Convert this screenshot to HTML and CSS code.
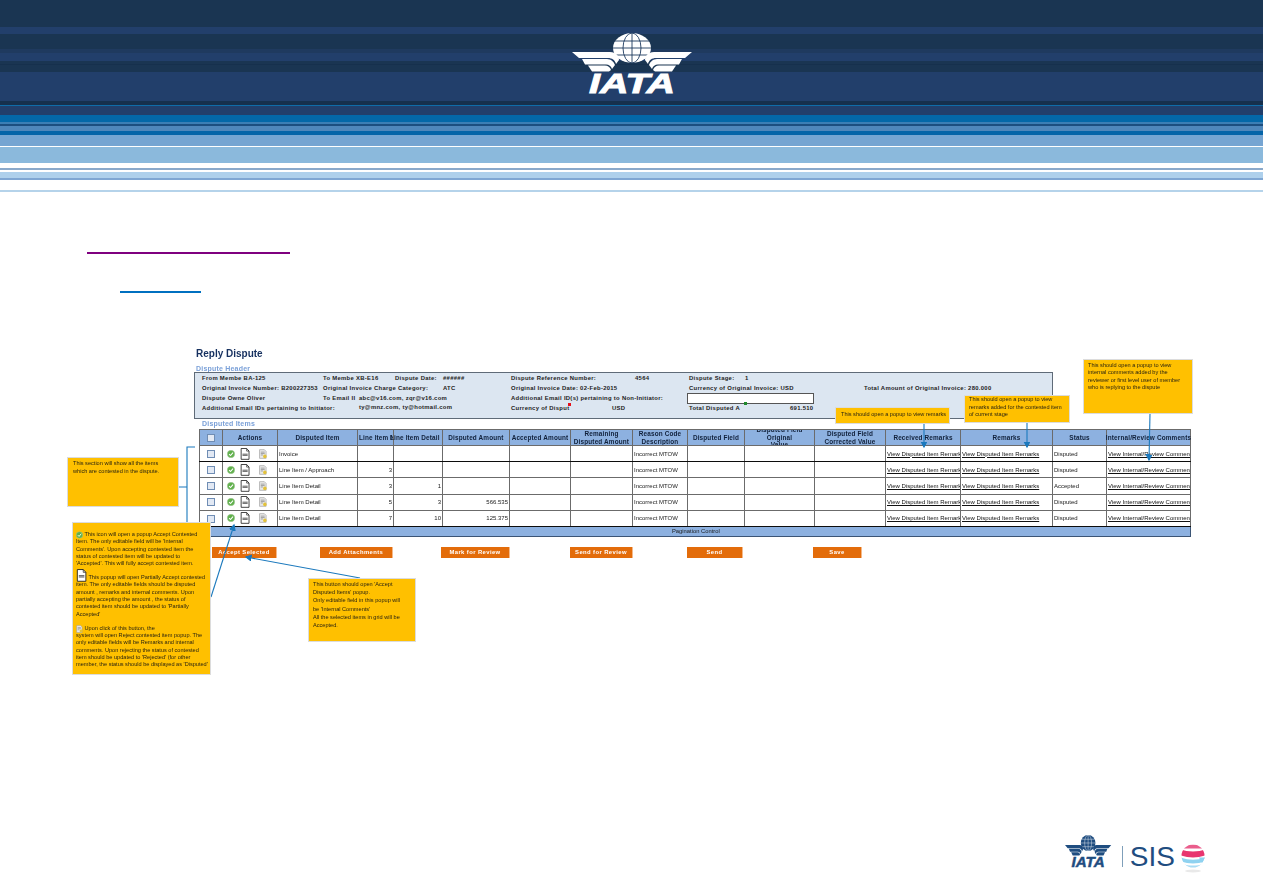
FILE: index.html
```html
<!DOCTYPE html>

<html>
  <head>
    <meta charset="UTF-8" />
    <title>Reply Dispute</title>
    <link rel="stylesheet" href="styles.css">
  </head>

  <body>
    <svg class="icon-defs" width="0" height="0">
      <defs>
        <g id="iata-mark">
          <ellipse class="mark__globe" cx="60" cy="15" rx="19" ry="15" />
          <g class="mark__grid">
            <ellipse cx="60" cy="15" rx="9" ry="15" />
            <path d="M60 0V30M43 8H77M41 15H79M43 22H77" />
          </g>
          <path d="M0 19H38C44 19 47 23 47 27L44 31C43 27 40 25 36 25H7Z" />
          <path d="M10 26H35C39 26 42 29 43 32L40 36C39 33 37 31.5 34 31.5H13Z" />
          <path d="M16 32.5H33C36 32.5 38 34 39 37L37 38.5H20Z" />
          <g transform="matrix(-1 0 0 1 120 0)">
            <path d="M0 19H38C44 19 47 23 47 27L44 31C43 27 40 25 36 25H7Z" />
            <path d="M10 26H35C39 26 42 29 43 32L40 36C39 33 37 31.5 34 31.5H13Z" />
            <path d="M16 32.5H33C36 32.5 38 34 39 37L37 38.5H20Z" />
          </g>
          <text class="mark__text" x="60" y="60" text-anchor="middle" textLength="86" lengthAdjust="spacingAndGlyphs">IATA</text>
        </g>
        <symbol id="icon-accept" viewBox="0 0 10 10">
          <circle cx="5" cy="5" r="4.6" fill="#5fb04a" stroke="#a9c9a0" stroke-width=".6" />
          <path d="M2.6 5.2L4.4 7L7.5 3.2" fill="none" stroke="#fff" stroke-width="1.3" />
        </symbol>
        <symbol id="icon-partial" viewBox="0 0 11 14">
          <path d="M1 .6H7.4L10.2 3.6V13.2H1Z" fill="#fff" stroke="#111" stroke-width=".9" />
          <path d="M7.4 .6V3.6H10.2" fill="none" stroke="#111" stroke-width=".7" />
          <path d="M2.6 7.2H8.6M2.6 8.6H8.6" stroke="#333" stroke-width=".9" />
        </symbol>
        <symbol id="icon-reject" viewBox="0 0 9 11">
          <path d="M.6 .6H6L8 2.6V10.4H.6Z" fill="#e8e8e8" stroke="#9a9a9a" stroke-width=".7" />
          <path d="M2 3.4H6.4M2 5H6.4M2 6.6H4.4" stroke="#777" stroke-width=".7" />
          <circle cx="6.6" cy="8.2" r="2" fill="#e3c23a" />
        </symbol>
      </defs>
    </svg>

    <div class="page">
      <header class="banner">
        <svg class="banner__logo" viewBox="0 0 122 62">
          <use href="#iata-mark" />
        </svg>
      </header>

      <div class="rule rule--section"></div>
      <div class="rule rule--subsection"></div>

      <main class="sheet">
        <h1 class="sheet__title">Reply Dispute</h1>
        <h2 class="sheet__label">Dispute Header</h2>

        <section class="summary">
          <b class="c1">From Membe BA-125</b>
          <b class="c2">To Membe XB-E16</b>
          <b class="c4">Dispute Date:</b>
          <b class="c5">######</b>
          <b class="c6">Dispute Reference Number:</b>
          <b class="c8">4564</b>
          <b class="c9">Dispute Stage:</b>
          <b class="c10">1</b>

          <b class="c1">Original Invoice Number: B200227353</b>
          <b class="c2">Original Invoice Charge Category:</b>
          <b class="c5">ATC</b>
          <b class="c6">Original Invoice Date: 02-Feb-2015</b>
          <b class="c9">Currency of Original Invoice: USD</b>
          <b class="c12">Total Amount of Original Invoice: 280.000</b>

          <b class="c1">Dispute Owne Oliver</b>
          <b class="c2">To Email II</b>
          <b class="c3">abc@v16.com, zqr@v16.com</b>
          <b class="c6">Additional Email ID(s) pertaining to Non-Initiator:</b>
          <span class="summary__input c9"></span>

          <b class="c1">Additional Email IDs pertaining to Initiator:</b>
          <b class="c3 summary__raised">ty@mnz.com, ty@hotmail.com</b>
          <b class="c6">Currency of Disput</b>
          <b class="c7">USD</b>
          <b class="c9">Total Disputed A</b>
          <b class="c11">691.510</b>

          <i class="summary__flag summary__flag--red"></i>
          <i class="summary__flag summary__flag--green"></i>
        </section>

        <h2 class="sheet__label sheet__label--items">Disputed Items</h2>

        <table class="items">
          <colgroup>
            <col class="w23" /><col class="w55" /><col class="w80" /><col class="w36" />
            <col class="w49" /><col class="w67" /><col class="w61" /><col class="w62" />
            <col class="w55" /><col class="w57" /><col class="w70" /><col class="w71" />
            <col class="w75" /><col class="w92" /><col class="w54" /><col class="w84" />
          </colgroup>
          <thead>
            <tr>
              <th><div class="th"><span class="check"></span></div></th>
              <th class="dark"><div class="th">Actions</div></th>
              <th class="dark"><div class="th">Disputed Item</div></th>
              <th class="dark"><div class="th th--start">Line Item Number</div></th>
              <th class="dark th-open"><div class="th th--nudge">Line Item Detail</div></th>
              <th class="dark"><div class="th">Disputed Amount</div></th>
              <th class="dark"><div class="th">Accepted Amount</div></th>
              <th class="dark"><div class="th">Remaining<br />Disputed Amount</div></th>
              <th class="dark"><div class="th">Reason Code<br />Description</div></th>
              <th><div class="th">Disputed Field</div></th>
              <th><div class="th">Disputed Field<br />Original<br />Value</div></th>
              <th><div class="th">Disputed Field<br />Corrected Value</div></th>
              <th><div class="th">Received Remarks</div></th>
              <th><div class="th">Remarks</div></th>
              <th><div class="th">Status</div></th>
              <th class="th-open"><div class="th">Internal/Review Comments</div></th>
            </tr>
          </thead>
          <tbody>
            <tr class="row-strong">
              <td class="mid"><span class="check"></span></td>
              <td><div class="actions"><svg class="a1"><use href="#icon-accept" /></svg><svg class="a2"><use href="#icon-partial" /></svg><svg class="a3"><use href="#icon-reject" /></svg></div></td>
              <td class="dark">Invoice</td>
              <td class="dark num"></td><td class="num"></td><td class="num"></td><td class="dark"></td><td class="dark"></td>
              <td class="dark">Incorrect MTOW</td><td></td><td></td><td></td>
              <td><a class="link">View Disputed Item Remarks</a></td>
              <td><a class="link">View Disputed Item Remarks</a></td>
              <td>Disputed</td>
              <td><a class="link">View Internal/Review Comments</a></td>
            </tr>
            <tr>
              <td class="mid"><span class="check"></span></td>
              <td><div class="actions"><svg class="a1"><use href="#icon-accept" /></svg><svg class="a2"><use href="#icon-partial" /></svg><svg class="a3"><use href="#icon-reject" /></svg></div></td>
              <td class="dark">Line Item / Approach</td>
              <td class="dark num">3</td><td class="num"></td><td class="num"></td><td class="dark"></td><td class="dark"></td>
              <td class="dark">Incorrect MTOW</td><td></td><td></td><td></td>
              <td><a class="link">View Disputed Item Remarks</a></td>
              <td><a class="link">View Disputed Item Remarks</a></td>
              <td>Disputed</td>
              <td><a class="link">View Internal/Review Comments</a></td>
            </tr>
            <tr>
              <td class="mid"><span class="check"></span></td>
              <td><div class="actions"><svg class="a1"><use href="#icon-accept" /></svg><svg class="a2"><use href="#icon-partial" /></svg><svg class="a3"><use href="#icon-reject" /></svg></div></td>
              <td class="dark">Line Item Detail</td>
              <td class="dark num">3</td><td class="num">1</td><td class="num"></td><td class="dark"></td><td class="dark"></td>
              <td class="dark">Incorrect MTOW</td><td></td><td></td><td></td>
              <td><a class="link">View Disputed Item Remarks</a></td>
              <td><a class="link">View Disputed Item Remarks</a></td>
              <td>Accepted</td>
              <td><a class="link">View Internal/Review Comments</a></td>
            </tr>
            <tr>
              <td class="mid"><span class="check"></span></td>
              <td><div class="actions"><svg class="a1"><use href="#icon-accept" /></svg><svg class="a2"><use href="#icon-partial" /></svg><svg class="a3"><use href="#icon-reject" /></svg></div></td>
              <td class="dark">Line Item Detail</td>
              <td class="dark num">5</td><td class="num">3</td><td class="num">566.535</td><td class="dark"></td><td class="dark"></td>
              <td class="dark">Incorrect MTOW</td><td></td><td></td><td></td>
              <td><a class="link">View Disputed Item Remarks</a></td>
              <td><a class="link">View Disputed Item Remarks</a></td>
              <td>Disputed</td>
              <td><a class="link">View Internal/Review Comments</a></td>
            </tr>
            <tr class="row-strong">
              <td class="mid"><span class="check"></span></td>
              <td><div class="actions"><svg class="a1"><use href="#icon-accept" /></svg><svg class="a2"><use href="#icon-partial" /></svg><svg class="a3"><use href="#icon-reject" /></svg></div></td>
              <td class="dark">Line Item Detail</td>
              <td class="dark num">7</td><td class="num">10</td><td class="num">125.375</td><td class="dark"></td><td class="dark"></td>
              <td class="dark">Incorrect MTOW</td><td></td><td></td><td></td>
              <td><a class="link">View Disputed Item Remarks</a></td>
              <td><a class="link">View Disputed Item Remarks</a></td>
              <td>Disputed</td>
              <td><a class="link">View Internal/Review Comments</a></td>
            </tr>
            <tr class="pagination">
              <td colspan="16">Pagination Control</td>
            </tr>
          </tbody>
        </table>

        <div class="buttons">
          <button class="btn btn--accept">Accept Selected</button>
          <button class="btn btn--attach">Add Attachments</button>
          <button class="btn btn--mark">Mark for Review</button>
          <button class="btn btn--send-review">Send for Review</button>
          <button class="btn btn--send">Send</button>
          <button class="btn btn--save">Save</button>
        </div>
      </main>

      <footer class="footer">
        <svg class="footer__mark" viewBox="0 0 122 62" preserveAspectRatio="none">
          <use href="#iata-mark" />
        </svg>
        <span class="footer__divider"></span>
        <span class="footer__sis">SIS</span>
        <svg class="footer__ball" viewBox="0 0 24 30">
          <defs>
            <clipPath id="ball"><circle cx="12" cy="12" r="11.5" /></clipPath>
          </defs>
          <g clip-path="url(#ball)">
            <rect width="24" height="24" fill="#fff" />
            <path d="M0 .5H24V4.6H0Z" fill="#ea5d8c" />
            <path d="M0 5.5C6 8 18 8 24 5.5V11.5C16 14 8 14 0 11.5Z" fill="#e8356f" />
            <path d="M0 13.5C8 16.5 16 16.5 24 13.5V17.5C16 20 8 20 0 17.5Z" fill="#8fd2f0" />
            <path d="M2 20C8 22 16 22 22 20L19 24H5Z" fill="#a9dcf4" />
          </g>
          <path d="M18 13.5H24L21 19Z" fill="#8fd2f0" />
          <ellipse cx="12" cy="27" rx="8" ry="1.4" fill="#e9e9e9" />
        </svg>
      </footer>

      <!-- annotations on top of the mockup -->
      <svg class="arrows" viewBox="0 0 1263 893">
        <defs>
          <marker id="tip" markerWidth="7" markerHeight="7" refX="5" refY="3" orient="auto">
            <path d="M0 .4L5 3L0 5.6Z" fill="#1b79bd" />
          </marker>
        </defs>
        <path d="M195 447H187V522M179 487H187" />
        <path d="M211 597L234 525" marker-end="url(#tip)" />
        <path d="M360 578L246 557" marker-end="url(#tip)" />
        <path d="M924 424V447" marker-end="url(#tip)" />
        <path d="M1027 423V447" marker-end="url(#tip)" />
        <path d="M1150 414L1149 460" marker-end="url(#tip)" />
      </svg>

      <aside class="note note--section">This section will show all the items<br />which are contested in the dispute.</aside>

      <aside class="note note--icons">
        <p><svg class="note__icon"><use href="#icon-accept" /></svg> This icon will open a popup Accept Contested<br />Item. The  only editable field will be 'Internal<br />Comments'. Upon  accepting contested item the<br />status of contested item will be updated to<br />'Accepted'. This will fully accept contested item.</p>
        <p><svg class="note__icon note__icon--doc"><use href="#icon-partial" /></svg> This popup will  open Partially Accept contested<br />item. The only editable fields should be disputed<br />amount , remarks and internal comments. Upon<br />partially accepting the amount , the status of<br />contested item should be updated to 'Partially<br />Accepted'</p>
        <p><svg class="note__icon"><use href="#icon-reject" /></svg> Upon click of this button, the<br />system will open Reject contested item popup. The<br />only editable fields  will  be  Remarks and internal<br />comments. Upon rejecting the status of contested<br />item should be updated to 'Rejected' (for other<br />member, the status should be displayed as 'Disputed'</p>
      </aside>

      <aside class="note note--button">This button should open 'Accept<br />Disputed Items' popup.<br />Only editable field in this popup will<br />be 'Internal Comments'<br />All the selected items in grid will be<br />Accepted.</aside>

      <aside class="note note--received">This should open a popup to view remarks</aside>
      <aside class="note note--remarks">This should open a popup to view<br />remarks added for the contested item<br />of current stage</aside>
      <aside class="note note--internal">This should open a popup to view<br />internal comments added by the<br />reviewer or first level user of member<br />who is replying to the dispute</aside>
    </div>
  </body>
</html>
```

FILE: styles.css
```css
:root {
  --color-title: #16305f;
  --color-label: #7aa0d8;
  --color-panel: #dce6f1;
  --color-grid: #6b6b6b;
  --color-grid-dark: #0c0c0c;
  --color-head: #8db1e0;
  --color-note: #ffc000;
  --color-button: #e36c0a;
  --color-arrow: #1b79bd;
}

* {
  box-sizing: border-box;
  margin: 0;
  padding: 0;
}

html,
body {
  height: 100%;
  overflow: hidden;
}

body {
  background-color: #fff;
  color: #1a1a1a;
  font-family: "Liberation Sans", Arial, sans-serif;
}

.icon-defs {
  position: absolute;
}

.page {
  position: relative;
  display: flex;
  flex-direction: column;
  height: 893px;
}

/* banner */
.banner {
  display: flex;
  justify-content: center;
  flex: none;
  height: 193px;
  padding-top: 33px;
  padding-left: 3px;
  background: linear-gradient(
    to bottom,
    #1a3552 0 27px,
    #223f6b 27px 34px,
    #1a3552 34px 49px,
    #1f3a5f 49px 53px,
    #223f6b 53px 61px,
    #1a3552 61px 64px,
    #16304d 64px 65px,
    #1a3552 65px 72px,
    #223f6b 72px 101px,
    #16304d 101px 105px,
    #0f6ca8 105px 106px,
    #223f6b 106px 115px,
    #0468a8 115px 122px,
    #3c7fb5 122px 124px,
    #1c4f80 124px 126px,
    #4f87bb 126px 131px,
    #0564a8 131px 135px,
    #76a5d2 135px 146px,
    #fff 146px 147px,
    #8bb9dc 147px 163px,
    #fff 163px 168px,
    #8aa9cb 168px 170px,
    #fff 170px 172px,
    #aed0ec 172px 178px,
    #7fa6d3 178px 180px,
    #fff 180px 190px,
    #b5d3ea 190px 192px,
    #fff 192px
  );
}

.banner__logo {
  width: 122px;
  height: 62px;
  color: #fff;
  fill: currentColor;
  --mark-line: #1d3a5f;
}

.mark__grid {
  fill: none;
  stroke: var(--mark-line);
  stroke-width: 0.9;
}

.mark__text {
  font-family: "Liberation Sans", Arial, sans-serif;
  font-size: 28px;
  font-style: italic;
  font-weight: 700;
  stroke: currentColor;
  stroke-width: 0.9;
}

/* section rules */
.rule {
  flex: none;
  height: 2px;
}

.rule--section {
  width: 203px;
  margin: 59px 0 0 87px;
  background-color: #7f007f;
}

.rule--subsection {
  width: 81px;
  margin: 37px 0 0 120px;
  background-color: #0070c0;
}

/* mockup */
.sheet {
  flex: none;
  margin: 54px 0 0 194px;
  filter: blur(0.35px);
}

.sheet__title {
  height: 13px;
  margin-left: 2px;
  color: var(--color-title);
  font-size: 10px;
  line-height: 13px;
}

.sheet__label {
  height: 8px;
  margin: 4px 0 0 2px;
  color: var(--color-label);
  font-size: 7px;
  line-height: 9px;
  letter-spacing: 0.2px;
}

.sheet__label--items {
  height: 10px;
  margin: 0 0 0 8px;
  line-height: 10px;
}

/* summary panel */
.summary {
  position: relative;
  display: grid;
  grid-template-columns: 7px 121px 36px 36px 48px 68px 101px 23px 54px 56px 45px 74px 188px;
  grid-auto-rows: 10px;
  align-items: center;
  width: 859px;
  height: 47px;
  border: 1px solid #5f6b78;
  background-color: var(--color-panel);
  color: #1c1c1c;
  font-size: 5.9px;
  letter-spacing: 0.3px;
  white-space: nowrap;
}

.c1 { grid-column: 2; }
.c2 { grid-column: 3; }
.c3 { grid-column: 4; }
.c4 { grid-column: 5; }
.c5 { grid-column: 6; }
.c6 { grid-column: 7; }
.c7 { grid-column: 8; }
.c8 { grid-column: 9; }
.c9 { grid-column: 10; }
.c10 { grid-column: 11; }
.c11 { grid-column: 12; }
.c12 { grid-column: 13; }

.summary__raised {
  position: relative;
  top: -1px;
}

.summary__input {
  width: 127px;
  height: 11px;
  margin-left: -2px;
  border: 1px solid #555;
  background-color: #fff;
}

.summary__flag {
  position: absolute;
  width: 3px;
  height: 3px;
}

.summary__flag--red {
  left: 373px;
  top: 30px;
  background-color: #e8101a;
}

.summary__flag--green {
  left: 549px;
  top: 29px;
  background-color: #1f8a2c;
}

/* disputed items table */
.items {
  width: 991px;
  margin-left: 5px;
  border-collapse: collapse;
  table-layout: fixed;
  border: 1px solid var(--color-grid);
  font-size: 6px;
  white-space: nowrap;
}

.w23 { width: 23px; }
.w36 { width: 36px; }
.w49 { width: 49px; }
.w54 { width: 54px; }
.w55 { width: 55px; }
.w57 { width: 57px; }
.w61 { width: 61px; }
.w62 { width: 62px; }
.w67 { width: 67px; }
.w70 { width: 70px; }
.w71 { width: 71px; }
.w75 { width: 75px; }
.w80 { width: 80px; }
.w84 { width: 84px; }
.w92 { width: 92px; }

.items th,
.items td {
  border: 1px solid var(--color-grid);
  overflow: hidden;
}

.items th {
  height: 16px;
  background-color: var(--color-head);
  color: #10203a;
  font-size: 6.4px;
  letter-spacing: 0.15px;
  line-height: 7.6px;
}

.items .dark {
  border-left-color: var(--color-grid-dark);
}

.items .th-open {
  overflow: visible;
}

.th {
  display: flex;
  align-items: center;
  justify-content: center;
  height: 15px;
  overflow: hidden;
  text-align: center;
}

.th--start {
  justify-content: flex-start;
  padding-left: 1px;
}

.th--nudge {
  justify-content: flex-start;
  margin-left: -4px;
  overflow: visible;
}

.th-open .th {
  overflow: visible;
}

.items td {
  height: 16.2px;
  padding: 0 1px;
  line-height: 8px;
  vertical-align: middle;
}

.items .row-strong td {
  border-bottom-color: var(--color-grid-dark);
}

.items .mid {
  text-align: center;
}

.items .num {
  text-align: right;
}

.check {
  display: inline-block;
  width: 8px;
  height: 8px;
  border: 1px solid #6f8db4;
  background-color: #e2e9f4;
  vertical-align: middle;
}

.actions {
  display: flex;
  align-items: center;
  height: 14px;
  padding-left: 3px;
}

.a1 {
  width: 8px;
  height: 8px;
}

.a2 {
  width: 10px;
  height: 12px;
  margin-left: 5px;
}

.a3 {
  width: 8px;
  height: 10px;
  margin-left: 9px;
}

.link {
  color: #111;
  font-size: 6px;
  text-decoration: underline;
}

.items .pagination td {
  height: 10px;
  padding-left: 472px;
  border-color: #3b5475;
  background-color: var(--color-head);
  font-size: 5.8px;
}

/* buttons */
.buttons {
  display: flex;
  margin: 10px 0 0 18px;
}

.btn {
  flex: none;
  height: 11px;
  border: none;
  border-right: 1px solid #f4b98a;
  background-color: var(--color-button);
  color: #fff;
  font-family: inherit;
  font-size: 5.9px;
  font-weight: 700;
  letter-spacing: 0.4px;
}

.btn--accept { width: 65px; }
.btn--attach { width: 73px; margin-left: 43px; }
.btn--mark { width: 69px; margin-left: 48px; }
.btn--send-review { width: 63px; margin-left: 60px; }
.btn--send { width: 56px; margin-left: 54px; }
.btn--save { width: 49px; margin-left: 70px; }

/* footer logo */
.footer {
  display: flex;
  align-items: flex-end;
  justify-content: flex-end;
  margin-top: auto;
  padding: 0 58px 19px 0;
}

.footer__mark {
  width: 47px;
  height: 33px;
  margin-bottom: 6px;
  color: #1f4d80;
  fill: currentColor;
  --mark-line: #fff;
}

.footer__divider {
  width: 1px;
  height: 21px;
  margin: 0 0 7px 10px;
  background-color: #7f9fba;
}

.footer__sis {
  margin: 0 0 2px 7px;
  color: #1f4d80;
  font-size: 28px;
  line-height: 30px;
}

.footer__ball {
  width: 24px;
  height: 30px;
  margin-left: 6px;
}

/* annotations */
.arrows {
  position: absolute;
  left: 0;
  top: 0;
  width: 1263px;
  height: 893px;
  fill: none;
  stroke: var(--color-arrow);
  stroke-width: 1.1;
  pointer-events: none;
}

.note {
  position: absolute;
  border: 1px solid #dcdcdc;
  background-color: var(--color-note);
  color: #2a2410;
  font-size: 5.6px;
  line-height: 8px;
  white-space: nowrap;
  filter: blur(0.3px);
}

.note--section {
  left: 67px;
  top: 457px;
  width: 112px;
  height: 50px;
  padding: 1px 5px;
}

.note--icons {
  left: 72px;
  top: 522px;
  width: 139px;
  height: 153px;
  padding: 8px 3px 0 3px;
  line-height: 7.3px;
}

.note--icons p {
  margin-bottom: 6.7px;
}

.note__icon {
  width: 7px;
  height: 8px;
  margin: -2px 0;
  vertical-align: -1px;
}

.note__icon--doc {
  width: 11px;
  height: 13px;
  margin: -6px 0 -2px;
}

.note--button {
  left: 308px;
  top: 578px;
  width: 108px;
  height: 64px;
  padding: 1px 4px;
  line-height: 8.2px;
}

.note--received {
  left: 835px;
  top: 407px;
  width: 115px;
  height: 17px;
  padding: 2px 5px;
}

.note--remarks {
  left: 964px;
  top: 395px;
  width: 106px;
  height: 28px;
  padding: 0 4px;
  line-height: 7.6px;
}

.note--internal {
  left: 1083px;
  top: 359px;
  width: 110px;
  height: 55px;
  padding: 2px 4px;
  line-height: 7.4px;
}
```
